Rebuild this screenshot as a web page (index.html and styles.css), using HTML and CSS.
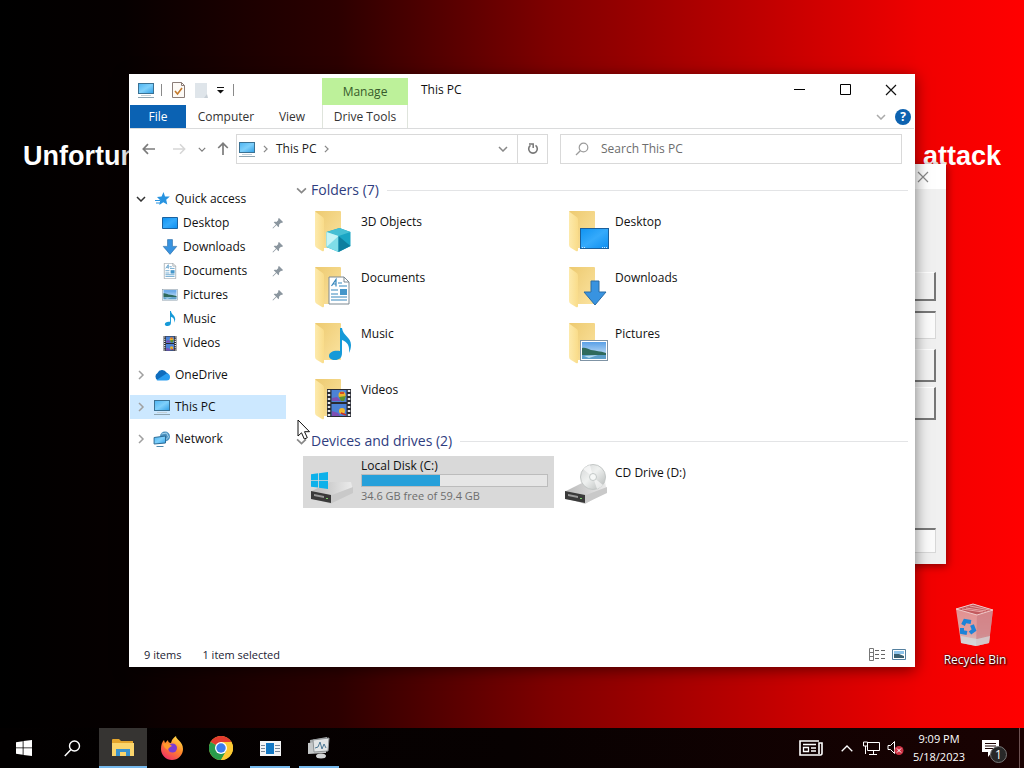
FILE: index.html
```
<!DOCTYPE html>
<html lang="en">
<head>
<meta charset="utf-8">
<title>This PC</title>
<link rel="stylesheet" href="styles.css">
</head>
<body>
<svg class="defs" aria-hidden="true">
  <defs>
    <linearGradient id="gScreen" x1="0" y1="0" x2="1" y2="1"><stop offset="0" stop-color="#4cb4f2"/><stop offset=".5" stop-color="#7fd0fb"/><stop offset="1" stop-color="#2f9fe6"/></linearGradient>
    <linearGradient id="gDesk" x1="0" y1="0" x2="1" y2="1"><stop offset="0" stop-color="#0f93f2"/><stop offset=".5" stop-color="#35aafb"/><stop offset="1" stop-color="#0c8ef0"/></linearGradient>
    <linearGradient id="gFlap" x1="0" y1="0" x2="1" y2="0"><stop offset="0" stop-color="#fdeaac"/><stop offset="1" stop-color="#f9dc8a"/></linearGradient>
    <linearGradient id="gBack" x1="0" y1="0" x2="1" y2="1"><stop offset="0" stop-color="#edca70"/><stop offset="1" stop-color="#fbe3a0"/></linearGradient>
    <linearGradient id="gDrive" x1="0" y1="0" x2="1" y2="0"><stop offset="0" stop-color="#b9b9b9"/><stop offset="1" stop-color="#ececec"/></linearGradient>
    <linearGradient id="gDisc" x1="0" y1="0" x2="1" y2="1"><stop offset="0" stop-color="#d4d6d6"/><stop offset=".45" stop-color="#eff1f0"/><stop offset="1" stop-color="#b3b7b6"/></linearGradient>
    <linearGradient id="gSky" x1="0" y1="0" x2="0" y2="1"><stop offset="0" stop-color="#5aa0e6"/><stop offset="1" stop-color="#dff0fb"/></linearGradient>
    <linearGradient id="gFox" x1=".8" y1="0" x2=".2" y2="1"><stop offset="0" stop-color="#ffe14a"/><stop offset=".45" stop-color="#ff8a2a"/><stop offset="1" stop-color="#f0286a"/></linearGradient>
    <linearGradient id="gBin" x1="0" y1="0" x2="0" y2="1"><stop offset="0" stop-color="#e58b8b"/><stop offset=".7" stop-color="#e0a3a3"/><stop offset="1" stop-color="#cfd0d2"/></linearGradient>
    <symbol id="pc" viewBox="0 0 18 16"><rect x="1.5" y="1.5" width="15" height="10" fill="url(#gScreen)" stroke="#3b7193"/><path d="M4 13.500h10" stroke="#c3d0d8"/><path d="M1 15.500h16" stroke="#8da4b1"/></symbol>
    <symbol id="folder" viewBox="0 0 44 48"><path d="M1 3q0-1 1-1h24q1 0 1 1v36H9z" fill="url(#gBack)"/><path d="M1 2.500l7 5q2 1 2 3V41q0 2-2 1l-5-3q-2-1-2-3z" fill="url(#gFlap)"/></symbol>
    <symbol id="note" viewBox="0 0 22 34"><path d="M11 0h2c1 8 9 9 9 17 0 3-1 6-2 8 1-8-2-11-7-13v13c0 5-3 7-7 7-4 0-6-2-6-4 0-4 5-6 11-5z" fill="#169ad8"/></symbol>
    <symbol id="down" viewBox="0 0 24 26"><path d="M8 1h8v11h7L12 25 1 12h7z" fill="#3893e0" stroke="#2a6ca5"/></symbol>
    <symbol id="doc" viewBox="0 0 22 28"><path d="M1 .5h15l5 5v22H1z" fill="#fff" stroke="#7c8992"/><path d="M16 .5v5h5" fill="none" stroke="#7c8992"/><path d="M3.500 9.500 8 3v7M5 7.500h3M10 6.500h4M11 9.500h8M3 13.500h7M3 17.500h7M3 20.500h16M3 23.500h16" fill="none" stroke="#3687bd" stroke-width="1.200"/><path d="M12 12.500h7v6h-7z" fill="#4596ca"/></symbol>
    <symbol id="desk" viewBox="0 0 30 22"><rect x=".5" y=".5" width="28" height="20" fill="url(#gDesk)" stroke="#1b5f9b"/><path d="M2 19.500h4M22 19.500h5" stroke="#cfe9fc" stroke-dasharray="1 1"/></symbol>
    <symbol id="pic" viewBox="0 0 28 22"><rect x=".5" y=".5" width="27" height="20" fill="#fff" stroke="#7f93a4"/><rect x="2" y="2" width="24" height="17" fill="url(#gSky)"/><path d="M2 8c3-1 6 1 9 2 5 1 9 1 15 3v2H2z" fill="#2f6a5c"/><path d="M2 15h24v4H2z" fill="#5d9fc9"/><path d="M4 16l14-1-9 3z" fill="#b6dcf0"/></symbol>
    <symbol id="film" viewBox="0 0 24 28"><path d="M0 0h24v28H0z" fill="#292b33"/><path d="M2 1v27M22 1v27" stroke="#e4e7ec" stroke-width="2.500" stroke-dasharray="2 2"/><path d="M4.500 1h15v12h-15zM4.500 15h15v12h-15z" fill="#4c82d6"/><path d="M5 9l5-1 4 4H5zM5 22l6 2 2 3H5z" fill="#7d4fb4"/><circle cx="15" cy="6" r="3.500" fill="#eeb62b"/><path d="M12 8l7-1-2 5h-3z" fill="#5c9330"/><circle cx="15" cy="22" r="3" fill="#f0b92f"/><path d="M13 4h4M14 24l5 2" stroke="#c92e26" stroke-width="1.500"/></symbol>
    <symbol id="cube" viewBox="0 0 26 26"><path d="M1 5l13-4 11 4v14l-12 6-12-5z" fill="#1aa5c4"/><path d="M1 5l13-4 11 4-12 4z" fill="#45bfd4"/><path d="M1 5l12 4v16L1 20z" fill="#7fdde8"/><path d="M1 5l12 4L1 20z" fill="#c4f4f6"/><path d="M13 9v16l12-6z" fill="#0e7f9f"/></symbol>
    <symbol id="drive" viewBox="0 0 44 24"><path d="M2 10 20 1h21l2 9-22 13L2 17z" fill="url(#gDrive)"/><path d="M2 10l20 4 21-8v6L22 22 2 18z" fill="#c9c9c9"/><path d="M1 10l20 4v8L1 18z" fill="#3a3a3a"/><path d="M4 13l10 2v2L4 15z" fill="#9a9a9a"/><path d="M16 17.500h2" stroke="#7bd26b"/></symbol>
    <symbol id="pin" viewBox="0 0 12 12"><path d="M7 1l4 4-1 1-1-.3-2 2c.3 1 0 2-.6 2.600L4.500 8 1 11.500.5 11 4 7.500 1.700 5.300C2.500 4.700 3.500 4.700 4.400 5l2-2L6 2z" fill="#8b969f"/></symbol>
    <symbol id="chevD" viewBox="0 0 10 6"><path d="M1 1l4 4 4-4" fill="none" stroke="currentColor" stroke-width="1.500"/></symbol>
    <symbol id="chevR" viewBox="0 0 6 10"><path d="M1 1l4 4-4 4" fill="none" stroke="currentColor" stroke-width="1.500"/></symbol>
    <symbol id="arrow" viewBox="0 0 14 12"><path d="M13 6H1.500M6 1.200 1.300 6 6 10.800" fill="none" stroke="currentColor" stroke-width="1.700"/></symbol>
    <symbol id="win" viewBox="0 0 16 16"><path d="M0 2.200 6.700 1.200V7.500H0zM7.500 1.100 16 0V7.500H7.500zM0 8.300H6.700V14.700L0 13.800zM7.500 8.300H16V16L7.500 14.900z" fill="currentColor"/></symbol>
    <symbol id="x" viewBox="0 0 12 12"><path d="M1 1l10 10M11 1 1 11" fill="none" stroke="currentColor" stroke-width="1.200"/></symbol>
  </defs>
</svg>

<main class="desktop">
  <p class="banner"><span>Unfortun</span><span>attack</span></p>

  <section class="dialog" aria-label="Dialog">
    <header class="dialog-bar"><button class="dialog-close" aria-label="Close dialog"><svg width="12" height="12"><use href="#x"/></svg></button></header>
    <div class="dialog-body">
      <button class="dlg-btn" aria-label="Action one"></button>
      <input class="dlg-input" aria-label="Value">
      <button class="dlg-btn tall" aria-label="Action two"></button>
      <button class="dlg-btn tall" aria-label="Action three"></button>
      <input class="dlg-input last" aria-label="Key">
    </div>
  </section>

  <a class="bin" href="#">
    <svg width="40" height="44" viewBox="0 0 40 44"><path d="M1 6 18 1l20 6-4 33-13 3-15-3z" fill="url(#gBin)"/><path d="M22 12 38 7l-4 33-13 3z" fill="#c97a80" opacity=".6"/><path d="M1 6 18 1l20 6-16 5z" fill="#c25a5e" stroke="#f0c9c9"/><path d="M7 6l21 3M11 5l20 3M15 3l19 4" stroke="#e9a3a3"/><path d="M6 33l16 3 13-3-1 7-13 3-15-3z" fill="#d5dbdd" opacity=".7"/><g fill="none" stroke="#1c83d8" stroke-width="4"><path d="M8 22l2-4 6 1"/><path d="M17 22l2 5-4 3"/><path d="M12 30l-5-1v-4"/></g></svg>
    <span>Recycle Bin</span>
  </a>

  <section class="explorer" aria-label="This PC">
    <header class="titlebar">
      <div class="quick">
        <svg width="18" height="16"><use href="#pc"/></svg>
        <i class="sep"></i>
        <button aria-label="Properties"><svg width="13" height="16" viewBox="0 0 13 16"><path d="M.5.5h9l3 3v12H.5z" fill="#fdfaf6" stroke="#8b7d78"/><path d="M9.500.5v3h3" fill="none" stroke="#8b7d78"/><path d="M3 9l2.500 3L10 6" fill="none" stroke="#c57a2b" stroke-width="1.600"/></svg></button>
        <button aria-label="New folder"><svg width="13" height="16" viewBox="0 0 13 16"><path d="M0 1h12v15H0z" fill="#dfe5ea"/><path d="M12 12l-3 4h4z" fill="#c6ced5"/></svg></button>
        <button class="menu" aria-label="Customize"><svg width="9" height="7" viewBox="0 0 9 7"><path d="M1 .5h7" stroke="#111"/><path d="M1 3h7L4.500 6.500z" fill="#111"/></svg></button>
        <i class="sep"></i>
      </div>
      <div class="manage">Manage</div>
      <h1 class="title">This PC</h1>
      <div class="controls">
        <button aria-label="Minimize"><svg width="11" height="11" viewBox="0 0 11 11"><path d="M0 5.500h11" stroke="#000"/></svg></button>
        <button aria-label="Maximize"><svg width="11" height="11" viewBox="0 0 11 11"><path d="M.5.5h10v10H.5z" fill="none" stroke="#000"/></svg></button>
        <button aria-label="Close"><svg width="12" height="12"><use href="#x"/></svg></button>
      </div>
    </header>

    <nav class="ribbon" aria-label="Ribbon">
      <div class="tabs"><button class="file">File</button><button class="computer">Computer</button><button class="view">View</button></div>
      <button class="tools">Drive Tools</button>
      <div class="help"><button aria-label="Expand ribbon" class="expand"><svg width="10" height="6"><use href="#chevD"/></svg></button><button class="q" aria-label="Help">?</button></div>
    </nav>

    <div class="navrow">
      <div class="arrows">
        <button aria-label="Back"><svg width="14" height="12"><use href="#arrow"/></svg></button>
        <button aria-label="Forward" class="off"><svg width="14" height="12" viewBox="0 0 14 12"><path d="M1 6h11.500M8 1.200 12.700 6 8 10.800" fill="none" stroke="currentColor" stroke-width="1.500"/></svg></button>
        <button aria-label="Recent" class="small"><svg width="8" height="5"><use href="#chevD"/></svg></button>
        <button aria-label="Up" class="up"><svg width="12" height="14" viewBox="0 0 12 14"><path d="M6 13V1.500M1.200 6 6 1.300 10.800 6" fill="none" stroke="currentColor" stroke-width="1.700"/></svg></button>
      </div>
      <div class="address">
        <svg width="18" height="16"><use href="#pc"/></svg>
        <svg class="crumb" width="5" height="8"><use href="#chevR"/></svg>
        <a href="#">This PC</a>
        <svg class="crumb" width="5" height="8"><use href="#chevR"/></svg>
        <button class="drop" aria-label="Previous locations"><svg width="10" height="6"><use href="#chevD"/></svg></button>
        <button class="refresh" aria-label="Refresh"><svg width="12" height="12" viewBox="0 0 12 12"><path d="M8.500 2.300A4.300 4.300 0 1 1 3.500 2.300" fill="none" stroke="#777" stroke-width="1.600"/><path d="M2 1h4.200v4" fill="none" stroke="#777" stroke-width="1.500"/></svg></button>
      </div>
      <label class="search">
        <svg width="14" height="14" viewBox="0 0 14 14"><circle cx="8.500" cy="5.500" r="4.300" fill="none" stroke="#9c9c9c" stroke-width="1.200"/><path d="M5.300 8.700 1 13" stroke="#9c9c9c" stroke-width="1.300"/></svg>
        <input type="text" placeholder="Search This PC" aria-label="Search This PC">
      </label>
    </div>

    <div class="body">
      <nav class="tree" aria-label="Folders">
        <a class="root open" href="#"><svg class="tw" width="10" height="6"><use href="#chevD"/></svg><svg class="ic star" width="16" height="16" viewBox="0 0 16 16"><path d="M9.500 1l1.500 4.400 4.800.2-3.600 3.200 1.100 4.800-4-2.400L5.300 14l.9-4.700L3 6l4.600-.4z" fill="#2793e0"/><path d="M1 9.500h5M2 12h4" stroke="#2793e0"/></svg><span>Quick access</span></a>
        <a class="leaf" href="#"><svg class="ic" width="16" height="12" viewBox="0 0 16 12"><path d="M.5.5h15v11H.5z" fill="url(#gDesk)" stroke="#1b62a0"/></svg><span>Desktop</span><svg class="pin" width="12" height="12"><use href="#pin"/></svg></a>
        <a class="leaf" href="#"><svg class="ic" width="16" height="16"><use href="#down"/></svg><span>Downloads</span><svg class="pin" width="12" height="12"><use href="#pin"/></svg></a>
        <a class="leaf" href="#"><svg class="ic" width="16" height="16"><use href="#doc"/></svg><span>Documents</span><svg class="pin" width="12" height="12"><use href="#pin"/></svg></a>
        <a class="leaf" href="#"><svg class="ic" width="16" height="12"><use href="#pic"/></svg><span>Pictures</span><svg class="pin" width="12" height="12"><use href="#pin"/></svg></a>
        <a class="leaf" href="#"><svg class="ic" width="16" height="16"><use href="#note"/></svg><span>Music</span></a>
        <a class="leaf" href="#"><svg class="ic" width="16" height="15"><use href="#film"/></svg><span>Videos</span></a>
        <a class="root" href="#"><svg class="tw" width="10" height="10"><use href="#chevR"/></svg><svg class="ic" width="17" height="12" viewBox="0 0 17 12"><path d="M4 11a4 4 0 0 1 0-7 5 5 0 0 1 9-.5A4 4 0 0 1 13 11z" fill="#0f6cbd"/><path d="M3 11 13 4.500A3.500 3.500 0 0 1 13 11.500H4z" fill="#2a9df0"/></svg><span>OneDrive</span></a>
        <a class="root sel" href="#"><svg class="tw" width="10" height="10"><use href="#chevR"/></svg><svg class="ic" width="18" height="16"><use href="#pc"/></svg><span>This PC</span></a>
        <a class="root" href="#"><svg class="tw" width="10" height="10"><use href="#chevR"/></svg><svg class="ic" width="17" height="16" viewBox="0 0 17 16"><circle cx="11.500" cy="5.500" r="5" fill="#4a91bf"/><path d="M8 3l5-1 2 4-3 3" fill="none" stroke="#a9d6ef"/><path d="M.6 6.500 12 5v7L.6 13z" fill="url(#gScreen)" stroke="#2c6c97"/><path d="M3 15.500h7" stroke="#4f88ab"/></svg><span>Network</span></a>
      </nav>

      <div class="content">
        <h2 class="group"><svg width="11" height="7"><use href="#chevD"/></svg><span>Folders (7)</span></h2>
        <div class="items">
          <a href="#"><svg class="big" width="44" height="48"><use href="#folder"/><use href="#cube" x="11" y="18" width="27" height="26"/></svg><span>3D Objects</span></a>
          <a href="#"><svg class="big" width="44" height="48"><use href="#folder"/><use href="#desk" x="12" y="19" width="30" height="22"/></svg><span>Desktop</span></a>
          <a href="#"><svg class="big" width="44" height="48"><use href="#folder"/><use href="#doc" x="14" y="11" width="22" height="29"/></svg><span>Documents</span></a>
          <a href="#"><svg class="big" width="44" height="48"><use href="#folder"/><use href="#down" x="15" y="15" width="24" height="26"/></svg><span>Downloads</span></a>
          <a href="#"><svg class="big" width="44" height="48"><use href="#folder"/><use href="#note" x="15" y="7" width="22" height="34"/></svg><span>Music</span></a>
          <a href="#"><svg class="big" width="44" height="48"><use href="#folder"/><use href="#pic" x="12" y="19" width="28" height="22"/></svg><span>Pictures</span></a>
          <a href="#"><svg class="big" width="44" height="48"><use href="#folder"/><use href="#film" x="13" y="12" width="24" height="28"/></svg><span>Videos</span></a>
        </div>
        <h2 class="group drives"><svg width="11" height="7"><use href="#chevD"/></svg><span>Devices and drives (2)</span></h2>
        <div class="tiles">
          <a class="tile picked" href="#">
            <svg width="46" height="48" viewBox="0 0 46 48"><use href="#drive" x="2" y="22" width="44" height="24"/><g color="#0db1ea"><use href="#win" x="3" y="13" width="17" height="17"/></g></svg>
            <span class="info"><span>Local Disk (C:)</span><span class="bar"><span class="fill" style="width:42%"></span></span><span class="free">34.6 GB free of 59.4 GB</span></span>
          </a>
          <a class="tile" href="#">
            <svg width="46" height="48" viewBox="0 0 46 48"><use href="#drive" x="2" y="22" width="44" height="24"/><circle cx="31" cy="18" r="12.500" fill="url(#gDisc)" stroke="#c3c7c6"/><path d="M31 18 21 10a13 13 0 0 1 7-4zM31 18l10 8a13 13 0 0 1-6 4z" fill="#fff" opacity=".6"/><circle cx="31" cy="18" r="3.500" fill="#f6f8f7" stroke="#c3c8c7"/></svg>
            <span class="info"><span>CD Drive (D:)</span></span>
          </a>
        </div>
      </div>
    </div>

    <footer class="status">
      <span>9 items</span><span>1 item selected</span>
      <div class="modes">
        <button aria-label="Details view"><svg width="17" height="13" viewBox="0 0 17 13"><path d="M.5.5h4v12h-4zM.5 4.500h4M.5 8.500h4" fill="none" stroke="#777"/><path d="M6 2.500h11M6 6.500h11M6 10.500h11" stroke="#666" stroke-dasharray="4 2"/></svg></button>
        <button aria-label="Large icons view"><svg width="14" height="11" viewBox="0 0 14 11"><path d="M.5.5h13v10H.5z" fill="#fff" stroke="#54809f"/><path d="M2 2h10v3H2z" fill="#8fc4ea"/><path d="M2 5h5l5 2v2H2z" fill="#3a5f70"/></svg></button>
      </div>
    </footer>
  </section>

  <svg class="cursor" width="14" height="22" viewBox="0 0 14 22"><path d="M1 1v16l3.500-3.200L7.300 20l3-1.300-2.800-6h5z" fill="#fff" stroke="#111"/></svg>
</main>

<footer class="taskbar">
  <button aria-label="Start"><svg width="16" height="16"><use href="#win"/></svg></button>
  <button aria-label="Search"><svg width="17" height="17" viewBox="0 0 17 17"><circle cx="10.500" cy="6" r="5" fill="none" stroke="#fff" stroke-width="1.400"/><path d="M7 9.500.8 16" stroke="#fff" stroke-width="1.500"/></svg></button>
  <div class="apps">
    <button class="active" aria-label="File Explorer"><svg width="22" height="18" viewBox="0 0 22 18"><path d="M0 1q0-1 1-1h6l2 2h12v15H0z" fill="#e4a52d"/><path d="M0 4h22v13H0z" fill="#fbd56c"/><path d="M4 17V10h14v7h-4v-4H8v4z" fill="#3b93ce"/></svg></button>
    <button aria-label="Firefox"><svg width="24" height="24" viewBox="0 0 24 24"><path d="M12 4c1-1 2-3 4-4 0 4 7 5 7 13a11 11 0 0 1-22 0C1 9 2 6 4 4l1 3 3-3c0 2 1 3 3 3z" fill="url(#gFox)"/><circle cx="12.500" cy="12" r="4.500" fill="#7a3bd2"/><path d="M3 8c4-1 7 0 9 2-2 1-4 2-4 4-3-1-4-3-5-6z" fill="#ff9a2c"/></svg></button>
    <button aria-label="Chrome"><svg width="24" height="24" viewBox="0 0 24 24"><circle cx="12" cy="12" r="12" fill="#fcc934"/><path d="M12 12 1.600 6A12 12 0 0 1 22.400 6H12z" fill="#e33b2e"/><path d="M1.600 6A12 12 0 0 0 12 24l5.200-9L12 12z" fill="#2a9c4b"/><path d="M12 6h10.400A12 12 0 0 1 12 24l5.200-9z" fill="#fcc934"/><circle cx="12" cy="12" r="6" fill="#fff"/><circle cx="12" cy="12" r="4.700" fill="#3b7ded"/></svg></button>
    <button class="run" aria-label="Application"><svg width="21" height="15" viewBox="0 0 21 15"><path d="M0 0h21v15H0z" fill="#f3f4f5"/><path d="M6 2h8v11H6z" fill="#1378c4"/><path d="M1 4.500h4M1 7.500h4M1 10.500h4M15 4.500h5M15 7.500h5M15 10.500h5" stroke="#79889a"/></svg></button>
    <button class="run" aria-label="Monitor"><svg width="24" height="22" viewBox="0 0 24 22"><path d="M3 3l17-3 1 13L4 16z" fill="#a8acae"/><path d="M1 6l18-2v12L1 17z" fill="#c4c7c8"/><path d="M6 3l16-2-1 13-14 1z" fill="#e2e5e6" stroke="#909496"/><path d="M8 11l3-1 2-5 2 7 2-5 2 4" fill="none" stroke="#4d7895"/><ellipse cx="14" cy="19" rx="5" ry="2.500" fill="#d3d5d6"/></svg></button>
  </div>
  <div class="tray">
    <button aria-label="News" class="news"><svg width="24" height="16" viewBox="0 0 24 16"><path d="M20 1H1v14h20.500q1.500 0 1.500-2V3h-3v11M4 4.500h13M12 8h5M12 11h5" fill="none" stroke="#fff" stroke-width="1.600"/><path d="M4.500 7.500h5v4h-5z" fill="none" stroke="#fff" stroke-width="1.300"/></svg></button>
    <button aria-label="Hidden icons"><svg width="12" height="7" viewBox="0 0 12 7"><path d="M.7 6.300 6 1l5.300 5.300" fill="none" stroke="#fff" stroke-width="1.300"/></svg></button>
    <button aria-label="Network status"><svg width="17" height="14" viewBox="0 0 17 14"><path d="M5 1.500h11.500v8H4.500V5M10.500 9.500v4M6 13.500h8M.5 1h4v4h-4zM2.500 5v8" fill="none" stroke="#fff"/></svg></button>
    <button aria-label="Volume"><svg width="17" height="16" viewBox="0 0 17 16"><path d="M1 5.500h2.500l4-4v12l-4-4H1z" fill="none" stroke="#fff"/><circle cx="12" cy="10.500" r="4.500" fill="#cf3345"/><path d="M10 8.500l4 4m0-4-4 4" stroke="#fff"/></svg></button>
    <div class="clock"><span>9:09 PM</span><span>5/18/2023</span></div>
    <button aria-label="Notifications" class="note"><svg width="17" height="17" viewBox="0 0 17 17"><path d="M0 0h17v12h-7l-4 5v-5H0z" fill="#fff"/><path d="M3 3.500h11M3 6h11M3 8.500h8" stroke="#1c0303"/></svg><span class="count">1</span></button>
    <i class="edge"></i>
  </div>
</footer>
</body>
</html>
```
FILE: styles.css
```
* { box-sizing: border-box; }
body {
  margin: 0;
  height: 100vh;
  display: flex;
  flex-direction: column;
  overflow: hidden;
  font: 12px/16px "Open Sans", "Noto Sans", sans-serif;
  color: #111;
  background: linear-gradient(90deg, #000 0%, #060000 12%, #2c0000 33%, #800000 54%, #b80000 72%, #f00000 90%, #ff0000 100%);
}
button {
  font: inherit;
  color: inherit;
  background: none;
  border: 0;
  padding: 0;
  display: flex;
  align-items: center;
  justify-content: center;
}
a { color: inherit; text-decoration: none; }
svg { display: block; flex: none; }
.defs { position: absolute; width: 0; height: 0; }
.desktop { position: relative; flex: 1; min-height: 0; }

.banner {
  margin: 0;
  padding: 141px 23px 0;
  display: flex;
  justify-content: space-between;
  color: #fff;
  font: bold 27px/30px "Liberation Sans", Arial, sans-serif;
}

/* Window behind the explorer */
.dialog {
  position: absolute;
  top: 164px;
  right: 78px;
  bottom: 164px;
  width: 300px;
  display: flex;
  flex-direction: column;
  background: #f0f0f0;
  box-shadow: 1px 2px 8px rgba(60, 0, 0, .6);
}
.dialog-bar { display: flex; justify-content: flex-end; height: 25px; padding-right: 17px; background: #fff; color: #888; }
.dialog-body { flex: 1; display: flex; flex-direction: column; padding: 83px 10px 11px; gap: 10px; }
.dlg-btn { height: 29px; background: #f3f3f3; border: 1px solid #fff; border-right: 2px solid #777; border-bottom: 2px solid #777; }
.dlg-btn.tall { height: 33px; margin-bottom: -5px; }
.dlg-input { height: 28px; border: 1px solid #d8d8d8; border-top: 2px solid #777; background: #fbfbfb; }
.dlg-input.last { height: 25px; margin-top: auto; }

.bin {
  position: absolute;
  right: 14px;
  bottom: 60px;
  width: 70px;
  display: flex;
  flex-direction: column;
  align-items: center;
  gap: 5px;
  color: #fff;
  white-space: nowrap;
  text-shadow: 1px 1px 2px #000, 0 0 2px #000;
}

.explorer {
  position: absolute;
  inset: 74px 109px 61px 129px;
  display: flex;
  flex-direction: column;
  padding: 0 1px;
  background: #fff;
  box-shadow: 0 3px 14px rgba(0, 0, 0, .5);
}
.titlebar { display: grid; grid-template-columns: 192px 86px 1fr auto; height: 31px; }
.quick { display: flex; align-items: center; padding-left: 7px; gap: 10px; }
.quick .menu { margin: 2px -2px 0 -2px; }
.sep { width: 1px; height: 12px; background: #8a8a8a; }
.quick svg + .sep { margin-left: -4px; }
.manage { margin-top: 4px; display: flex; align-items: center; justify-content: center; background: #bdf19a; color: #375b2b; }
.title { margin: 0; padding-left: 13px; font-size: 12px; font-weight: 400; line-height: 31px; }
.controls { display: flex; }
.controls button { width: 46px; }

.ribbon { display: grid; grid-template-columns: 192px 86px 1fr; height: 24px; border-bottom: 1px solid #dadbdc; color: #333; }
.tabs { display: flex; }
.file { width: 56px; background: #0b62b3; color: #fff; }
.computer { width: 80px; }
.view { width: 52px; }
.tools { border: 1px solid #dfe4dc; border-width: 0 1px; }
.help { display: flex; align-items: center; justify-content: flex-end; gap: 9px; padding-right: 3px; }
.expand { color: #aaa; }
.q { width: 16px; height: 16px; border-radius: 50%; background: #0d62b0; color: #fff; font-weight: 700; }

.navrow { display: flex; gap: 12px; padding: 5px 12px 5px 0; height: 40px; }
.arrows { display: flex; align-items: center; padding-left: 12px; gap: 16px; width: 94px; color: #7c7c7c; }
.arrows .off { color: #d6d6d6; }
.arrows .small { margin-left: -4px; }
.arrows .up { margin-left: -5px; }
.address, .search { display: flex; align-items: center; border: 1px solid #d9d9d9; min-width: 0; }
.address { flex: 309 1 0; padding-left: 1px; color: #222; }
.address .crumb { margin: 0 8px 0 7px; color: #888; }
.drop { margin-left: auto; width: 28px; align-self: stretch; color: #888; }
.refresh { width: 30px; align-self: stretch; border-left: 1px solid #d9d9d9; }
.search { flex: 326 1 0; padding-left: 14px; gap: 12px; }
.search input { flex: 1; min-width: 0; padding: 0; border: 0; outline: 0; font: inherit; background: none; }
.search input::placeholder { color: #6d6d6d; opacity: 1; }

.body { flex: 1; display: flex; min-height: 0; }
.tree { width: 156px; padding-top: 18px; }
.tree a { display: flex; align-items: center; height: 24px; white-space: nowrap; }
.root { margin-top: 8px; }
.root.open { margin-top: 0; }
.tree .tw { width: 10px; margin: 0 13px 0 6px; color: #a0a0a0; }
.tree .open .tw { color: #333; }
.tree .ic { width: 18px; margin-right: 4px; }
.tree .root .ic { margin-left: -6px; }
.tree .leaf { padding-left: 31px; }
.tree .pin { margin-left: auto; margin-right: 2px; }
.tree .sel { background: #cce8ff; }

.content { flex: 1; min-width: 0; margin-left: 10px; padding-top: 11px; }
.group { display: flex; align-items: center; gap: 4px; margin: 0; padding-right: 6px; color: #2f3d80; font-size: 14px; font-weight: 400; line-height: 20px; }
.group svg { color: #888; }
.group::after { content: ""; flex: 1; height: 1px; margin-left: 4px; background: #e3e4e6; }
.items, .tiles { display: grid; grid-template-columns: repeat(auto-fill, 254px); padding-left: 7px; }
.items { grid-auto-rows: 56px; margin-top: 7px; }
.items a { display: flex; gap: 3px; padding-left: 11px; }
.items span { padding-top: 7px; }
.big { margin-top: 2px; }
.tiles { margin-top: 5px; }
.tile { display: flex; align-items: center; width: 251px; height: 52px; padding: 0 6px 2px 5px; gap: 7px; }
.tile svg { margin-top: 3px; }
.tile:not(.picked) .info { padding-bottom: 16px; }
.picked { background: #d9d9d9; }
.info { flex: 1; display: flex; flex-direction: column; }
.bar { height: 13px; border: 1px solid #bcbcbc; background: #e6e6e6; }
.fill { display: block; height: 100%; background: #26a0da; }
.free { color: #6d6d6d; font-size: 11px; line-height: 18px; }

.status { display: flex; align-items: center; gap: 21px; height: 25px; padding: 0 8px 0 14px; color: #223; font-size: 11px; }
.modes { margin-left: auto; display: flex; align-items: center; gap: 6px; }

.cursor { position: absolute; left: 297px; top: 419px; }

.taskbar { display: flex; height: 40px; background: linear-gradient(90deg, #020000, #070101 50%, #1a0202); color: #fff; }
.taskbar button { width: 48px; }
.apps { display: flex; gap: 1px; margin-left: 3px; }
.apps button { position: relative; }
.apps .active { background: #363432; }
.apps .active::after, .apps .run::after { content: ""; position: absolute; inset: auto 4px 0; height: 2px; background: #76b9ed; }
.apps .active::after { inset: auto 0 0; }
.tray { margin-left: auto; display: flex; align-items: center; }
.taskbar .tray button { width: 24px; height: 40px; }
.taskbar .tray .news { width: 48px; }
.clock { display: flex; flex-direction: column; align-items: center; width: 64px; font-size: 11px; line-height: 18px; white-space: nowrap; }
.taskbar .tray .note { position: relative; width: 40px; margin: 0 7px 0 1px; }
.taskbar .note svg { margin-right: 3px; }
.count { position: absolute; right: 5px; bottom: 5px; width: 17px; height: 17px; border: 1px solid #777; border-radius: 50%; background: #282828; line-height: 15px; text-align: center; }
.edge { width: 1px; height: 40px; margin-right: 4px; background: #6d5252; }
```
